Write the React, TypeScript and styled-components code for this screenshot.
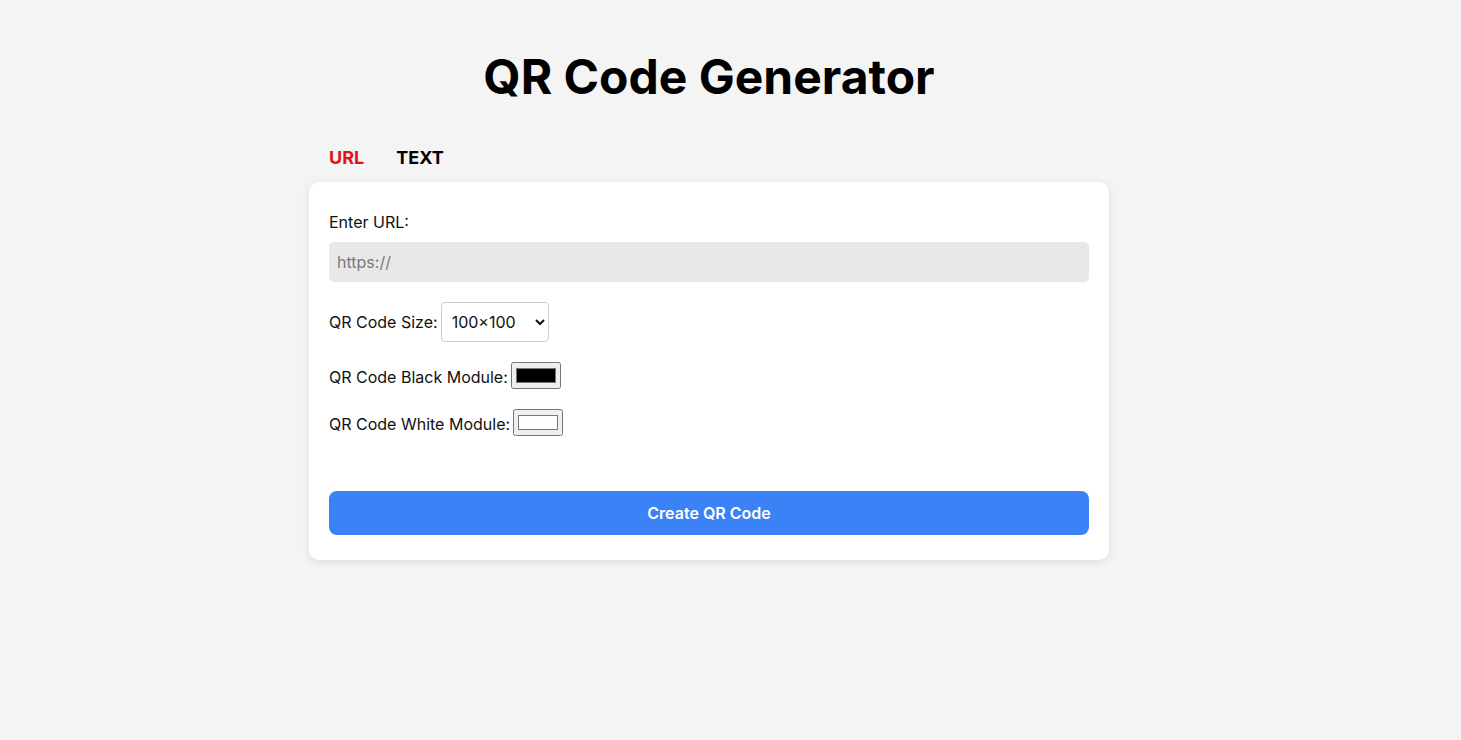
import styled, { createGlobalStyle } from "styled-components";

const GlobalStyle = createGlobalStyle`
	html, body {
		margin: 0;
		padding: 0;
		background-color: #f4f4f4;
		font-family: Inter, "Noto Sans", sans-serif;
		color: #111;
	}
`;

const App: React.FC = () => {
	return (
		<Page>
			<GlobalStyle />
			<Title>QR Code Generator</Title>

			<Content>
				<Tabs>
					<Tab $active>URL</Tab>
					<Tab>TEXT</Tab>
				</Tabs>

				<Card>
					<FieldLabel htmlFor="url">Enter URL:</FieldLabel>
					<UrlInput id="url" type="text" placeholder="https://" />

					<Row>
						<InlineLabel htmlFor="size">QR Code Size:</InlineLabel>
						<SizeSelect id="size" defaultValue="100">
							<option value="100">100×100</option>
							<option value="200">200×200</option>
							<option value="300">300×300</option>
						</SizeSelect>
					</Row>

					<Row>
						<InlineLabel htmlFor="dark">QR Code Black Module:</InlineLabel>
						<ColorInput id="dark" type="color" defaultValue="#000000" />
					</Row>

					<Row>
						<InlineLabel htmlFor="light">QR Code White Module:</InlineLabel>
						<ColorInput id="light" type="color" defaultValue="#ffffff" />
					</Row>

					<CreateButton>Create QR Code</CreateButton>
				</Card>
			</Content>
		</Page>
	);
};

const Page = styled.div`
	display: flex;
	flex-direction: column;
	align-items: center;
	min-height: 100vh;
	padding: 48px 43px 0 0;
	box-sizing: border-box;
`;

const Title = styled.h1`
	margin: 0;
	font-size: 48px;
	line-height: 58px;
	font-weight: 700;
	color: #000;
`;

const Content = styled.div`
	width: 800px;
	margin-top: 41px;
`;

const Tabs = styled.div`
	display: flex;
	flex-direction: row;
	gap: 32px;
	padding-left: 20px;
	margin-bottom: 13px;
`;

const Tab = styled.button<{ $active?: boolean }>`
	border: none;
	background: none;
	padding: 0;
	font-family: inherit;
	font-size: 18px;
	line-height: 22px;
	font-weight: 700;
	color: ${(p) => (p.$active ? "#e0131a" : "#000")};
	cursor: pointer;
`;

const Card = styled.div`
	display: flex;
	flex-direction: column;
	background-color: #fff;
	border-radius: 10px;
	box-shadow: 0 2px 8px rgba(0, 0, 0, 0.1);
	padding: 31px 20px 25px;
`;

const FieldLabel = styled.label`
	font-size: 16px;
	line-height: 19px;
	margin-bottom: 10px;
`;

const UrlInput = styled.input`
	height: 40px;
	box-sizing: border-box;
	border: none;
	border-radius: 5px;
	background-color: #e8e8e8;
	padding: 0 8px;
	font-family: inherit;
	font-size: 16px;
	color: #111;
	outline: none;
	margin-bottom: 20px;

	&::placeholder {
		color: #7a7a7a;
	}
`;

const Row = styled.div`
	display: flex;
	flex-direction: row;
	align-items: baseline;
	gap: 3px;
	margin-bottom: 20px;

	&:last-of-type {
		margin-bottom: 55px;
	}
`;

const InlineLabel = styled.label`
	font-size: 16px;
	line-height: 19px;
`;

const SizeSelect = styled.select`
	height: 40px;
	width: 108px;
	box-sizing: border-box;
	border: 1px solid #ccc;
	border-radius: 4px;
	background-color: #fff;
	padding: 0 6px;
	font-family: inherit;
	font-size: 16px;
	color: #111;
`;

const ColorInput = styled.input`
	width: 50px;
	height: 27px;
	margin: 0;
`;

const CreateButton = styled.button`
	height: 44px;
	border: none;
	border-radius: 8px;
	background-color: #3b82f6;
	color: #fff;
	font-family: inherit;
	font-size: 16px;
	font-weight: 600;
	cursor: pointer;

	&:hover {
		background-color: #2f6fdc;
	}
`;

export default App;
